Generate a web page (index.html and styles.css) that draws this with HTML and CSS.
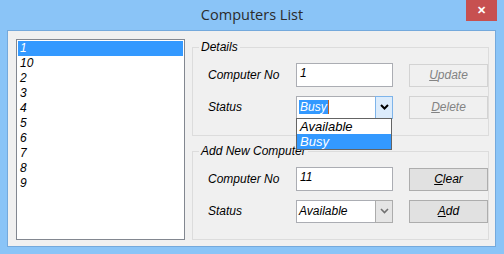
FILE: index.html
```html
<!DOCTYPE html>
<html lang="en">
<head>
    <meta charset="UTF-8">
    <title>Computers List</title>
    <link rel="stylesheet" href="styles.css">
</head>
<body>
    <div class="window">
        <div class="titlebar">
            <span></span>
            <span class="title">Computers List</span>
            <span class="close">&#x2715;</span>
        </div>

        <div class="client">
            <ul class="listbox">
                <li class="selected">1</li>
                <li>10</li>
                <li>2</li>
                <li>3</li>
                <li>4</li>
                <li>5</li>
                <li>6</li>
                <li>7</li>
                <li>8</li>
                <li>9</li>
            </ul>

            <div class="groups">
                <fieldset class="group">
                    <legend>Details</legend>
                    <div class="form-grid">
                        <span class="label">Computer No</span>
                        <div class="textbox">1</div>
                        <button class="btn" disabled><u>U</u>pdate</button>

                        <span class="label">Status</span>
                        <div class="combo open">
                            <span class="combo-text"><span class="sel">Busy</span><span class="caret"></span></span>
                            <span class="combo-btn">
                                <svg width="9" height="6" viewBox="0 0 9 6"><polyline points="1,1 4.5,4.5 8,1" fill="none" stroke="#000" stroke-width="2"/></svg>
                            </span>
                            <ul class="dropdown">
                                <li>Available</li>
                                <li class="selected">Busy</li>
                            </ul>
                        </div>
                        <button class="btn" disabled><u>D</u>elete</button>
                    </div>
                </fieldset>

                <fieldset class="group">
                    <legend>Add New Computer</legend>
                    <div class="form-grid">
                        <span class="label">Computer No</span>
                        <div class="textbox">11</div>
                        <button class="btn"><u>C</u>lear</button>

                        <span class="label">Status</span>
                        <div class="combo">
                            <span class="combo-text">Available</span>
                            <span class="combo-btn">
                                <svg width="9" height="6" viewBox="0 0 9 6"><polyline points="1,1 4.5,4.5 8,1" fill="none" stroke="#707070" stroke-width="1.6"/></svg>
                            </span>
                        </div>
                        <button class="btn"><u>A</u>dd</button>
                    </div>
                </fieldset>
            </div>
        </div>
    </div>
</body>
</html>
```

FILE: styles.css
```css
body {
    margin: 0;
    background-color: #8ac4f7;
    font-family: "Liberation Sans", Arial, sans-serif;
    font-size: 12px;
    font-style: italic;
    color: #000;
}
.window {
    width: 504px;
    height: 254px;
    overflow: hidden;
}
.titlebar {
    height: 30px;
    display: grid;
    grid-template-columns: 1fr auto 1fr;
    align-items: start;
}
.title {
    font-family: "Open Sans", "Noto Sans", sans-serif;
    font-style: normal;
    font-size: 14.5px;
    line-height: 30px;
    color: #2b2b2b;
}
.close {
    justify-self: end;
    width: 31px;
    height: 21px;
    margin-right: 7px;
    background-color: #c75050;
    color: #fff;
    font-style: normal;
    font-size: 11px;
    font-weight: bold;
    line-height: 21px;
    text-align: center;
}
.client {
    margin: 0 8px 0 7px;
    height: 215px;
    border: 1px solid #74a9dc;
    background-color: #f0f0f0;
    padding: 8px 6px 6px 8px;
    box-sizing: border-box;
    height: 217px;
    display: flex;
    gap: 7px;
}
.listbox {
    list-style: none;
    margin: 0;
    padding: 1px;
    width: 169px;
    height: 201px;
    box-sizing: border-box;
    border: 1px solid #828790;
    background-color: #fff;
}
.listbox li {
    height: 15px;
    line-height: 15px;
    padding-left: 2px;
}
.listbox li.selected {
    background-color: #3399ff;
    color: #fff;
}
.groups {
    width: 297px;
}
.group {
    margin: 0;
    padding: 8px 8px 16px 15px;
    border: 1px solid #dcdcdc;
    min-width: 0;
}
.group + .group {
    margin-top: 7px;
}
.group legend {
    padding: 0 2px;
    margin-left: -9px;
    line-height: 16px;
}
.form-grid {
    display: grid;
    grid-template-columns: 88px 105px 79px;
    grid-template-rows: 24px 24px;
    row-gap: 8px;
    align-items: center;
}
.textbox {
    width: 97px;
    height: 24px;
    box-sizing: border-box;
    border: 1px solid #abadb3;
    background-color: #fff;
    padding: 2px 3px;
    line-height: 15px;
}
.combo {
    position: relative;
    width: 97px;
    height: 23px;
    box-sizing: border-box;
    border: 1px solid #abadb3;
    background-color: #fff;
    display: flex;
}
.combo-text {
    flex: 1;
    padding: 2px 2px;
    line-height: 17px;
    display: flex;
    align-items: center;
}
.combo .sel {
    background-color: #3399ff;
    color: #fff;
    padding: 0 1px;
    line-height: 14px;
}
.caret {
    width: 1px;
    height: 14px;
    background-color: #c06020;
}
.combo-btn {
    width: 16px;
    margin: -1px -1px -1px 0;
    border: 1px solid #acacac;
    background-color: #e5e5e5;
    display: flex;
    align-items: center;
    justify-content: center;
}
.combo.open .combo-btn {
    border-color: #7eb4ea;
    background-color: #dcecfc;
}
.dropdown {
    position: absolute;
    top: 21px;
    left: -1px;
    width: 96px;
    box-sizing: border-box;
    list-style: none;
    margin: 0;
    padding: 0;
    border: 1px solid #646464;
    background-color: #fff;
    z-index: 2;
}
.dropdown li {
    height: 15px;
    line-height: 15px;
    padding-left: 3px;
    font-size: 13px;
}
.dropdown li.selected {
    background-color: #3399ff;
    color: #fff;
}
.btn {
    width: 79px;
    height: 23px;
    margin-left: 8px;
    border: 1px solid #adadad;
    background-color: #e1e1e1;
    font-family: inherit;
    font-size: 12px;
    font-style: italic;
    color: #000;
    padding: 0;
}
.btn:disabled {
    border-color: #d3d3d3;
    background-color: #f0f0f0;
    color: #838383;
}
```
